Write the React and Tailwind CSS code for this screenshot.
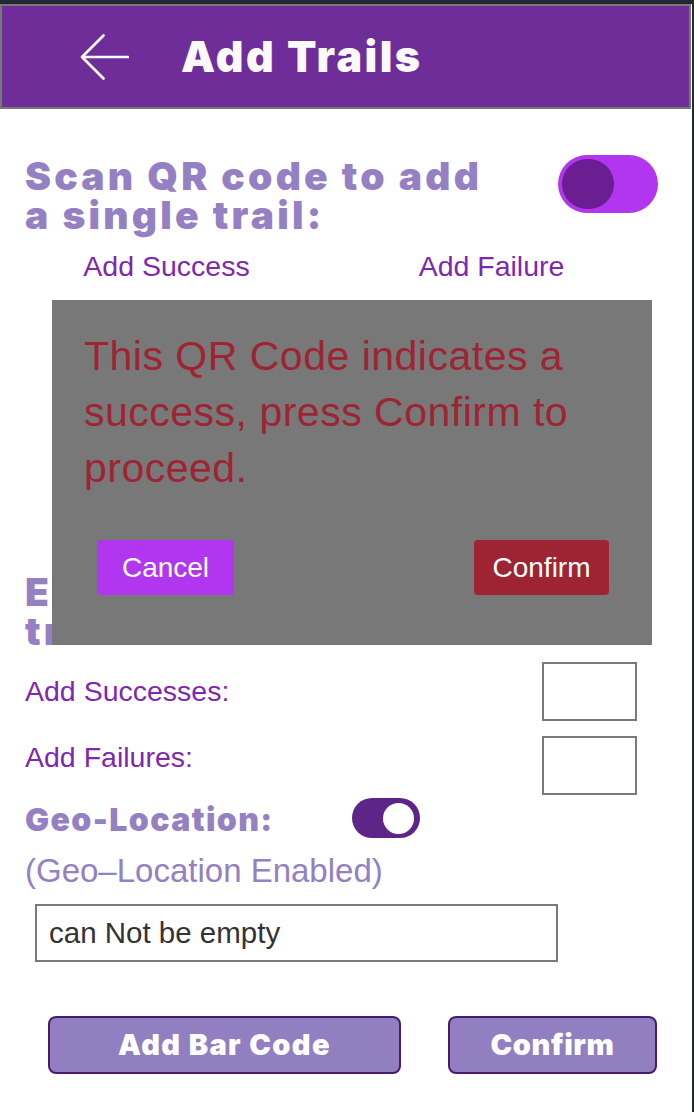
import React from "react";

const heavy = "font-['Inter',sans-serif] font-black";

export default function App() {
  return (
    <div className="min-h-screen bg-[#232833] pt-[4px]">
      <div className="relative w-[692px] h-[1108px] bg-white font-['Liberation_Sans',Arial,sans-serif] overflow-hidden">
        {/* Header */}
        <div className="w-[691px] h-[105px] bg-[#6f2d9a] border-2 border-[#777777] flex items-center">
          <svg className="ml-[78px]" width="49" height="46" viewBox="0 0 49 46" fill="none">
            <path d="M48 23 H2 M23.5 1.5 L2 23 L23.5 44.5" stroke="white" strokeWidth="2.6" strokeLinecap="round" strokeLinejoin="round" />
          </svg>
          <h1 className={`${heavy} ml-[52px] text-[43px] leading-none text-[#fbfaf8] tracking-[2.4px]`}>Add Trails</h1>
        </div>

        {/* Content */}
        <div className="pl-[25px] pt-[47px]">
          <div className="flex justify-between w-[633px]">
            <h2 className={`${heavy} text-[39px] leading-[39px] text-[#9480c2] tracking-[3.2px] w-[520px]`}>
              Scan QR code to add<br />a single trail:
            </h2>
            <div className="-mt-[1px] w-[100px] h-[58px] rounded-full bg-[#b236ef] flex items-center pl-[4px]">
              <div className="w-[52px] h-[50px] rounded-full bg-[#6a1e91]" />
            </div>
          </div>

          <div className="grid grid-cols-2 w-[650px] -ml-[21px] mt-[16px] text-center text-[28.5px] leading-[32px] text-[#7f27b1]">
            <span>Add Success</span>
            <span>Add Failure</span>
          </div>

          {/* scanner area (hidden under dialog) */}
          <div className="h-[290px]" />

          <h2 className={`${heavy} text-[39px] leading-[39px] text-[#9480c2] tracking-[3.2px]`}>
            Enter number of each<br />trail:
          </h2>

          <div className="flex justify-between items-start w-[612px] mt-[12px] text-[28.5px] leading-[32px] text-[#7f27b1]">
            <span className="pt-[13px]">Add Successes:</span>
            <div className="w-[95px] h-[59px] border-2 border-[#7a7a7a] bg-white" />
          </div>
          <div className="flex justify-between items-start w-[612px] mt-[15px] text-[28.5px] leading-[32px] text-[#7f27b1]">
            <span className="pt-[5px]">Add Failures:</span>
            <div className="w-[95px] h-[59px] border-2 border-[#7a7a7a] bg-white" />
          </div>

          <div className="flex items-center mt-[3px] h-[40px]">
            <span className={`${heavy} text-[32px] leading-[40px] text-[#9480c2] w-[327px] tracking-[1.4px] pt-[3px]`}>Geo-Location:</span>
            <div className="w-[68px] h-[40px] rounded-full bg-[#5e2589] flex items-center justify-end pr-[6px]">
              <div className="w-[31px] h-[31px] rounded-full bg-white" />
            </div>
          </div>

          <div className="mt-[14px] text-[33px] leading-[38px] text-[#9480c2]">(Geo–Location Enabled)</div>

          <div className="ml-[10px] mt-[14px] w-[523px] h-[58px] border-2 border-[#7a7a7a] flex items-center pl-[12px] text-[29.5px] text-[#333333]">
            can Not be empty
          </div>

          <div className="flex mt-[54px] ml-[23px]">
            <button className={`${heavy} w-[353px] h-[58px] rounded-[8px] border-2 border-[#4a1b6b] bg-[#927fc1] text-white text-[29px] tracking-[1.4px]`}>Add Bar Code</button>
            <button className={`${heavy} ml-[47px] w-[209px] h-[58px] rounded-[8px] border-2 border-[#4a1b6b] bg-[#927fc1] text-white text-[29px] tracking-[0.6px]`}>Confirm</button>
          </div>
        </div>

        {/* Dialog overlay */}
        <div className="absolute left-[52px] top-[296px] w-[600px] h-[345px] bg-[#787878] pl-[32px] pt-[28px]">
          <p className="text-[41px] leading-[56px] text-[#9e2433] tracking-[0.5px]">
            This QR Code indicates a<br />success, press Confirm to<br />proceed.
          </p>
          <div className="flex justify-between w-[512px] ml-[13px] mt-[44px]">
            <button className="w-[137px] h-[55px] rounded-[4px] bg-[#b236ef] text-white text-[28px]">Cancel</button>
            <button className="w-[135px] h-[55px] rounded-[4px] bg-[#9e2433] text-white text-[28px]">Confirm</button>
          </div>
        </div>
      </div>
    </div>
  );
}
